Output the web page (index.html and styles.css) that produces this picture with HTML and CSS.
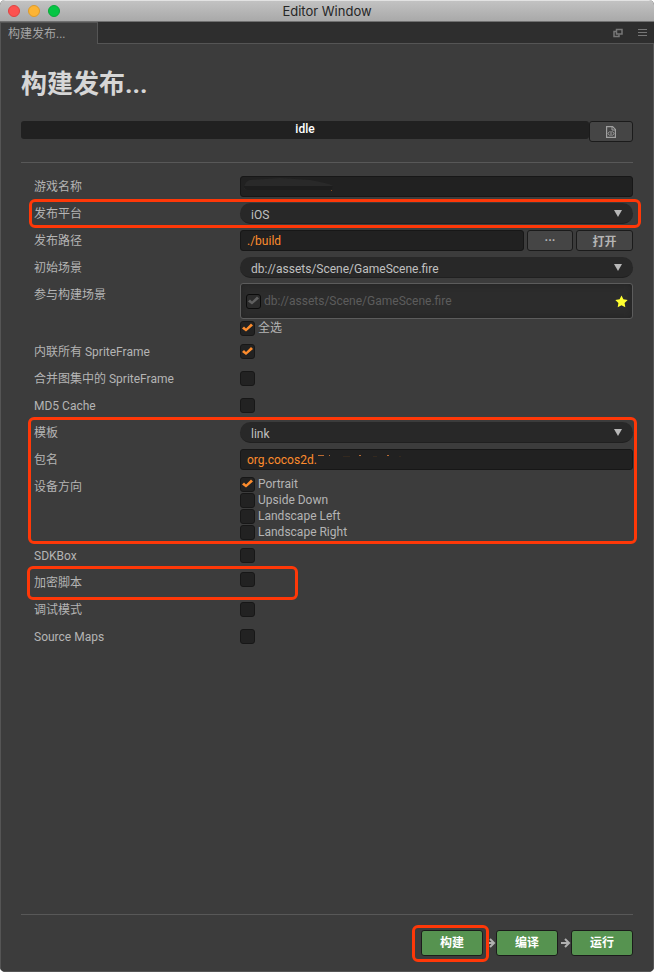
FILE: index.html
```html
<!DOCTYPE html>
<html lang="zh-CN">
<head>
<meta charset="utf-8">
<meta name="viewport" content="width=device-width, initial-scale=1">
<title>Editor Window</title>
<link rel="stylesheet" href="styles.css">
</head>
<body>
<div class="window">
  <header class="titlebar">
    <div class="lights"><span class="light close"></span><span class="light minimize"></span><span class="light expand"></span></div>
    <div class="window-title">Editor Window</div>
  </header>
  <nav class="tabs">
    <a class="tab" href="#build">构建发布...</a>
    <div class="tab-tools">
      <button class="tool" type="button" aria-label="Pop out"><svg width="10" height="10" viewBox="0 0 10 10" fill="none" stroke="#777"><path d="M3.500 1.500h5.500v4.500h-5.500z" stroke-width="1.500"/><path d="M3 3.500H1v5h5V6.500" stroke-width="1.500"/></svg></button>
      <button class="tool" type="button" aria-label="Menu"><svg width="10" height="10" viewBox="0 0 10 10" fill="none" stroke="#777"><path d="M0 1.500h9M0 4.500h9M0 7.500h9"/></svg></button>
    </div>
  </nav>
  <main class="panel" id="build">
    <h1>构建发布...</h1>
    <div class="status">
      <div class="progress">idle</div>
      <button class="btn log" type="button" aria-label="Log"><svg width="10" height="12" viewBox="0 0 10 12" fill="none" stroke="#a0a0a0"><path d="M.6.6h6l2.800 2.800v8h-8.800z" stroke-width="1.200"/><path d="M6 .5V4h3.500M3.500 5.500 2 7.500l1.500 2M6.500 5.500 8 7.500l-1.500 2M5 5v5"/></svg></button>
    </div>
    <form class="form">
      <div class="row">
        <label for="name">游戏名称</label>
        <div class="control redacted">
          <input class="text" id="name" type="text">
          <svg class="smudge" width="96" height="18" viewBox="0 0 96 18"><path d="M4 12 Q5 5 10 4 L40 2 L70 4 Q92 8 93 10 Q92 14 89 14 H8 Q4 14 4 12Z" fill="#292929"/><path d="M4 10 H93 Q92 14 89 14 H8 Q4 14 4 10Z" fill="#1d1d1d"/><path d="M91 14h1v1h-1z" fill="#8a4a20"/></svg>
        </div>
      </div>
      <div class="row marked mark-platform">
        <label for="platform">发布平台</label>
        <div class="control select"><select id="platform"><option>iOS</option></select></div>
      </div>
      <div class="row">
        <label for="path">发布路径</label>
        <div class="control">
          <input class="text" id="path" type="text" value="./build">
          <button class="btn browse" type="button">···</button>
          <button class="btn open" type="button">打开</button>
        </div>
      </div>
      <div class="row">
        <label for="scene">初始场景</label>
        <div class="control select"><select id="scene"><option>db://assets/Scene/GameScene.fire</option></select></div>
      </div>
      <div class="row">
        <span class="label">参与构建场景</span>
        <div class="control checks scenes">
          <div class="scene-box">
            <label class="check"><input type="checkbox" checked disabled>db://assets/Scene/GameScene.fire</label>
            <svg width="13" height="13" viewBox="0 0 13 13"><path d="M6.500 .4 8.400 4.300 12.700 4.900 9.600 7.900 10.300 12.200 6.500 10.200 2.700 12.200 3.400 7.900 .3 4.900 4.600 4.300Z" fill="#ffff30"/></svg>
          </div>
          <label class="check"><input type="checkbox" checked>全选</label>
        </div>
      </div>
      <div class="row">
        <label for="inline">内联所有 SpriteFrame</label>
        <div class="control"><input id="inline" type="checkbox" checked></div>
      </div>
      <div class="row">
        <label for="merge">合并图集中的 SpriteFrame</label>
        <div class="control"><input id="merge" type="checkbox"></div>
      </div>
      <div class="row">
        <label for="md5">MD5 Cache</label>
        <div class="control"><input id="md5" type="checkbox"></div>
      </div>
      <div class="group marked mark-device">
        <div class="row">
          <label for="template">模板</label>
          <div class="control select"><select id="template"><option>link</option></select></div>
        </div>
        <div class="row">
          <label for="package">包名</label>
          <div class="control redacted">
            <input class="text" id="package" type="text" value="org.cocos2d.">
            <svg class="remnant" width="90" height="3" viewBox="0 0 90 3" fill="#b96a32"><path d="M0 0h6v1H0zM11 0h1v1h-1zM41 0h2v1h-2zM69 0h2v1h-2z"/><path d="M25 1h7v1h-7zM55 1h4v1h-4zM81 1h2v1h-2z" fill="#33291f"/></svg>
          </div>
        </div>
        <div class="row">
          <span class="label">设备方向</span>
          <div class="control checks">
            <label class="check"><input type="checkbox" checked>Portrait</label>
            <label class="check"><input type="checkbox">Upside Down</label>
            <label class="check"><input type="checkbox">Landscape Left</label>
            <label class="check"><input type="checkbox">Landscape Right</label>
          </div>
        </div>
      </div>
      <div class="row">
        <label for="sdkbox">SDKBox</label>
        <div class="control"><input id="sdkbox" type="checkbox"></div>
      </div>
      <div class="row marked mark-encrypt">
        <label for="encrypt">加密脚本</label>
        <div class="control top"><input id="encrypt" type="checkbox"></div>
      </div>
      <div class="row">
        <label for="debug">调试模式</label>
        <div class="control"><input id="debug" type="checkbox"></div>
      </div>
      <div class="row">
        <label for="maps">Source Maps</label>
        <div class="control"><input id="maps" type="checkbox"></div>
      </div>
    </form>
    <footer class="actions">
      <div class="marked mark-build"><button class="btn go" type="button">构建</button></div>
      <svg class="arrow" viewBox="0 0 13 12"><path d="M3 6h8M7 2l4 4-4 4"/></svg>
      <button class="btn go" type="button">编译</button>
      <svg class="arrow" viewBox="0 0 13 12"><path d="M3 6h8M7 2l4 4-4 4"/></svg>
      <button class="btn go" type="button">运行</button>
    </footer>
  </main>
</div>
</body>
</html>
```
FILE: styles.css
```css
*, *::before, *::after { box-sizing: border-box; }

body {
  margin: 0;
  background: #fff;
  color: #b4b4b4;
  font: 12px/21px Roboto, "Noto Sans CJK SC", sans-serif;
}

button, input, select { margin: 0; font: inherit; color: inherit; }

.window {
  display: flex;
  flex-direction: column;
  min-height: 100vh;
  overflow: hidden;
  border-radius: 5px;
  background: #3c3c3c;
}

.titlebar {
  display: grid;
  grid-template-columns: 1fr auto 1fr;
  align-items: center;
  height: 22px;
  padding: 0 8px;
  border-top: 1px solid #e2e2e2;
  border-bottom: 1px solid #707070;
  background: linear-gradient(#c2c2c2, #a9a9a9);
}
.lights { display: flex; gap: 8px; }
.light { width: 12px; height: 12px; border: 1px solid; border-radius: 50%; }
.close { background: #fc5250; border-color: #df4341; }
.minimize { background: #fdb434; border-color: #de9a29; }
.expand { background: #06c644; border-color: #09a93a; }
.window-title { color: #262626; font: 13px/20px Inter, sans-serif; }

.tabs {
  display: flex;
  justify-content: space-between;
  height: 22px;
  background: linear-gradient(#555, #555) bottom / 100% 1px no-repeat #2e2e2e;
}
.tab {
  width: 98px;
  padding: 0 7px;
  border: solid #555;
  border-width: 1px 1px 0;
  background: #3c3c3c;
  color: #a5a5a5;
  line-height: 23px;
  text-decoration: none;
}
.tab-tools { display: flex; gap: 15px; align-items: center; padding-right: 6px; }
.tool { display: flex; padding: 0; border: 0; background: none; }

.panel {
  display: flex;
  flex: 1;
  flex-direction: column;
  padding: 24px 20px 15px;
  border: solid #555;
  border-width: 0 1px 1px;
}
h1 { margin: 0 0 21px; color: #d6d6d6; font-size: 26px; line-height: 32px; font-weight: 700; }

.status { display: flex; align-items: flex-start; padding-bottom: 20px; border-bottom: 1px solid #585858; }
.progress {
  flex: 1;
  height: 18px;
  border-radius: 3px;
  background: #212121;
  color: #fff;
  font-weight: 500;
  line-height: 16px;
  text-align: center;
}

.btn {
  display: flex;
  align-items: center;
  justify-content: center;
  height: 21px;
  padding: 0;
  border: 1px solid #1b1b1b;
  border-radius: 3px;
  background: #454545;
  font-weight: 700;
  line-height: 20px;
}
.log { width: 44px; }
.browse { width: 46px; }
.open { width: 57px; padding-top: 2px; }

.form, .group { display: flex; flex-direction: column; gap: 6px; }
.form { padding: 13px 0 20px 13px; }
.row { display: flex; align-items: flex-start; }
.row > label, .label { width: 206px; height: 21px; flex: none; line-height: 23px; }
.control { display: flex; flex: 1; align-items: center; gap: 3px; min-width: 0; min-height: 21px; }
.control.top { align-items: flex-start; }

.text {
  flex: 1;
  min-width: 0;
  height: 21px;
  padding: 2px 6px 0;
  border: 1px solid #171717;
  border-radius: 3px;
  background: #212121;
  color: #fd8c2d;
}

.select { position: relative; }
.select::after {
  position: absolute;
  top: 7px;
  right: 11px;
  width: 8px;
  height: 7px;
  background: #b8b8b8;
  clip-path: polygon(0 0, 100% 0, 50% 100%);
  content: "";
  pointer-events: none;
}
select {
  width: 100%;
  height: 21px;
  padding: 2px 11px 0;
  border: 0;
  border-bottom: 1px solid #202020;
  border-radius: 11px;
  background: #282828;
  color: #c0c0c0;
  appearance: none;
}

input[type="checkbox"] {
  flex: none;
  width: 15px;
  height: 15px;
  border: 1px solid #171717;
  border-radius: 3px;
  background: #222;
  appearance: none;
}
input[type="checkbox"]:checked::before {
  display: block;
  width: 13px;
  height: 13px;
  background: #fd8c2d;
  clip-path: polygon(1px 7px, 3px 5px, 5px 7px, 10px 2px, 12px 4px, 5px 10px);
  content: "";
}
input[type="checkbox"]:disabled { border-color: #0c0c0c; background: #2b2b2b; }
input[type="checkbox"]:disabled::before { background: #606060; }

.checks { flex-direction: column; align-items: stretch; gap: 0; margin-bottom: -1px; }
.check { display: flex; align-items: center; gap: 3px; height: 16px; line-height: 17px; }
.scenes { gap: 1px; margin-top: -1px; }
.scene-box {
  display: flex;
  align-items: center;
  justify-content: space-between;
  height: 36px;
  padding: 0 4px 0 5px;
  border: 1px solid #5c5c5c;
  border-radius: 3px;
  background: #2c2c2c;
  box-shadow: inset 0 0 6px #232323;
  color: #5c5c5c;
}

.redacted { position: relative; }
.smudge { position: absolute; top: 0; left: 0; pointer-events: none; }
.remnant { position: absolute; top: 6px; left: 78px; pointer-events: none; }

.marked { position: relative; }
.marked::before {
  position: absolute;
  z-index: 1;
  border: 3px solid #ff3808;
  border-radius: 6px;
  content: "";
  pointer-events: none;
}
.mark-platform::before { inset: -4px -8px -4px -5px; }
.mark-device::before { inset: -5px -4px -5px -6px; }
.mark-encrypt::before { top: -6px; bottom: -7px; left: -7px; width: 271px; }
.mark-build::before { inset: -5px -6px -6px -9px; }

.actions {
  display: flex;
  align-items: center;
  justify-content: flex-end;
  margin-top: auto;
  padding-top: 15px;
  border-top: 1px solid #585858;
}
.go { width: 62px; height: 26px; background: #569350; color: #fff; }
.arrow { width: 13px; height: 12px; fill: none; stroke: #b0b0b0; stroke-width: 2; }
```
